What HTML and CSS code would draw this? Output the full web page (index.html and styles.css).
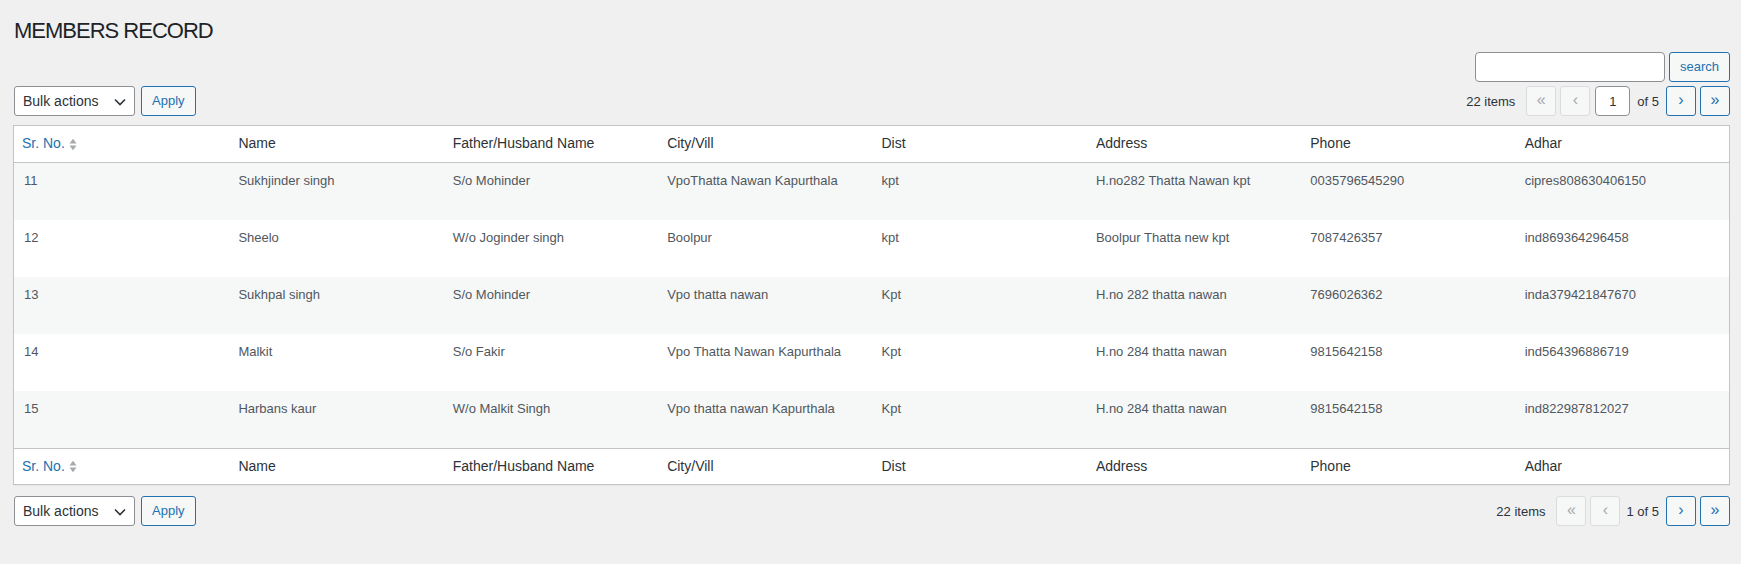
FILE: index.html
```html
<!DOCTYPE html>
<html lang="en">
<head>
<meta charset="utf-8">
<title>Members Record</title>
<link rel="stylesheet" href="styles.css">
</head>
<body>
<div class="wrap">
  <h1 class="title">MEMBERS RECORD</h1>

  <form class="search-box">
    <input type="search" class="search-input" aria-label="Search">
    <button type="button" class="button">search</button>
  </form>

  <div class="tablenav top">
    <div class="bulk">
      <div class="select-wrap">
        <select class="bulk-select"><option>Bulk actions</option></select>
        <svg class="chev" width="12" height="8" viewBox="0 0 12 8"><path d="M1 1.5l5 5 5-5" fill="none" stroke="#2c3338" stroke-width="1.6"/></svg>
      </div>
      <button type="button" class="button">Apply</button>
    </div>
    <div class="pages">
      <span class="num">22 items</span>
      <span class="pbtn disabled">«</span>
      <span class="pbtn disabled">‹</span>
      <input class="current-page" value="1" aria-label="Current page">
      <span class="of">of 5</span>
      <a class="pbtn">›</a>
      <a class="pbtn">»</a>
    </div>
  </div>

  <table class="list">
    <thead>
      <tr>
        <th class="sortable"><a><span>Sr. No.</span><svg class="sort" width="8" height="13" viewBox="0 0 8 13"><polygon points="0.5,5.6 4,0.8 7.5,5.6" fill="#a7aaad"/><polygon points="0.5,7.4 4,12.2 7.5,7.4" fill="#a7aaad"/></svg></a></th>
        <th>Name</th>
        <th>Father/Husband Name</th>
        <th>City/Vill</th>
        <th>Dist</th>
        <th>Address</th>
        <th>Phone</th>
        <th>Adhar</th>
      </tr>
    </thead>
    <tbody>
      <tr>
        <td>11</td><td>Sukhjinder singh</td><td>S/o Mohinder</td><td>VpoThatta Nawan Kapurthala</td><td>kpt</td><td>H.no282 Thatta Nawan kpt</td><td>0035796545290</td><td>cipres808630406150</td>
      </tr>
      <tr>
        <td>12</td><td>Sheelo</td><td>W/o Joginder singh</td><td>Boolpur</td><td>kpt</td><td>Boolpur Thatta new kpt</td><td>7087426357</td><td>ind869364296458</td>
      </tr>
      <tr>
        <td>13</td><td>Sukhpal singh</td><td>S/o Mohinder</td><td>Vpo thatta nawan</td><td>Kpt</td><td>H.no 282 thatta nawan</td><td>7696026362</td><td>inda379421847670</td>
      </tr>
      <tr>
        <td>14</td><td>Malkit</td><td>S/o Fakir</td><td>Vpo Thatta Nawan Kapurthala</td><td>Kpt</td><td>H.no 284 thatta nawan</td><td>9815642158</td><td>ind564396886719</td>
      </tr>
      <tr>
        <td>15</td><td>Harbans kaur</td><td>W/o Malkit Singh</td><td>Vpo thatta nawan Kapurthala</td><td>Kpt</td><td>H.no 284 thatta nawan</td><td>9815642158</td><td>ind822987812027</td>
      </tr>
    </tbody>
    <tfoot>
      <tr>
        <th class="sortable"><a><span>Sr. No.</span><svg class="sort" width="8" height="13" viewBox="0 0 8 13"><polygon points="0.5,5.6 4,0.8 7.5,5.6" fill="#a7aaad"/><polygon points="0.5,7.4 4,12.2 7.5,7.4" fill="#a7aaad"/></svg></a></th>
        <th>Name</th>
        <th>Father/Husband Name</th>
        <th>City/Vill</th>
        <th>Dist</th>
        <th>Address</th>
        <th>Phone</th>
        <th>Adhar</th>
      </tr>
    </tfoot>
  </table>

  <div class="tablenav bottom">
    <div class="bulk">
      <div class="select-wrap">
        <select class="bulk-select"><option>Bulk actions</option></select>
        <svg class="chev" width="12" height="8" viewBox="0 0 12 8"><path d="M1 1.5l5 5 5-5" fill="none" stroke="#2c3338" stroke-width="1.6"/></svg>
      </div>
      <button type="button" class="button">Apply</button>
    </div>
    <div class="pages">
      <span class="num">22 items</span>
      <span class="pbtn disabled">«</span>
      <span class="pbtn disabled">‹</span>
      <span class="paging-text">1 of 5</span>
      <a class="pbtn">›</a>
      <a class="pbtn">»</a>
    </div>
  </div>
</div>
</body>
</html>
```

FILE: styles.css
```css
* { box-sizing: border-box; }

body {
  margin: 0;
  background: #f0f0f1;
  font-family: "Liberation Sans", Arial, sans-serif;
  font-size: 13px;
  color: #3c434a;
}

.wrap {
  padding: 0 11px 0 13px;
}

.title {
  margin: 0;
  padding: 16px 0 0 1px;
  font-size: 22px;
  font-weight: 400;
  line-height: 30px;
  letter-spacing: -1px;
  color: #1d2327;
}

.search-box {
  display: flex;
  justify-content: flex-end;
  gap: 4px;
  margin: 6px 0 0;
}

.search-input {
  width: 190px;
  height: 30px;
  border: 1px solid #8c8f94;
  border-radius: 4px;
  background: #fff;
  font: inherit;
  padding: 0 8px;
}

.button {
  height: 30px;
  padding: 0 10px;
  border: 1px solid #2271b1;
  border-radius: 3px;
  background: #f6f7f7;
  color: #2271b1;
  font-family: inherit;
  font-size: 13px;
  line-height: 28px;
}

.tablenav {
  display: flex;
  justify-content: space-between;
  align-items: center;
  height: 30px;
}

.tablenav.top { margin-top: 4px; }
.tablenav.bottom { margin-top: 11px; }

.bulk {
  display: flex;
  gap: 6px;
  padding-left: 1px;
}

.select-wrap {
  position: relative;
  width: 121px;
  height: 30px;
}

.bulk-select {
  appearance: none;
  -webkit-appearance: none;
  width: 100%;
  height: 30px;
  border: 1px solid #8c8f94;
  border-radius: 3px;
  background: #fff;
  color: #2c3338;
  font-family: inherit;
  font-size: 14px;
  padding: 0 24px 0 8px;
}

.chev {
  position: absolute;
  right: 9px;
  top: 12px;
  pointer-events: none;
}

.pages {
  display: flex;
  align-items: center;
  gap: 4px;
  color: #2c3338;
}

.num { margin-right: 7px; }

.pbtn {
  display: flex;
  align-items: center;
  justify-content: center;
  width: 30px;
  height: 30px;
  border: 1px solid #2271b1;
  border-radius: 3px;
  background: #f6f7f7;
  color: #2271b1;
  font-size: 16px;
  line-height: 1;
  padding-bottom: 2px;
}

.pbtn.disabled {
  border-color: #dcdcde;
  color: #a7aaad;
}

.current-page {
  width: 35px;
  height: 30px;
  margin-left: 1px;
  border: 1px solid #8c8f94;
  border-radius: 4px;
  background: #fff;
  text-align: center;
  font-family: inherit;
  font-size: 13px;
  color: #2c3338;
}

.of { margin: 0 3px; }
.paging-text { margin: 0 3px 0 2px; }

.list {
  width: 100%;
  margin-top: 9px;
  table-layout: fixed;
  border-collapse: separate;
  border-spacing: 0;
  border: 1px solid #c3c4c7;
  background: #fff;
  box-shadow: 0 1px 1px rgba(0,0,0,.04);
}

.list th {
  text-align: left;
  font-weight: 400;
  font-size: 14px;
  line-height: 1.4em;
  padding: 8px 10px;
  color: #2c3338;
}

.list thead th { border-bottom: 1px solid #c3c4c7; }
.list tfoot th { border-top: 1px solid #c3c4c7; }

.list th.sortable { padding: 0; }

.list th.sortable a {
  display: flex;
  align-items: center;
  gap: 4px;
  padding: 8px;
  color: #2271b1;
}

.sort { margin-top: 1px; }

.list td {
  font-size: 13px;
  line-height: 1.5em;
  padding: 8px 10px 29.5px;
  color: #50575e;
  vertical-align: top;
}

.list tbody tr:nth-child(odd) { background: #f6f7f7; }
```
